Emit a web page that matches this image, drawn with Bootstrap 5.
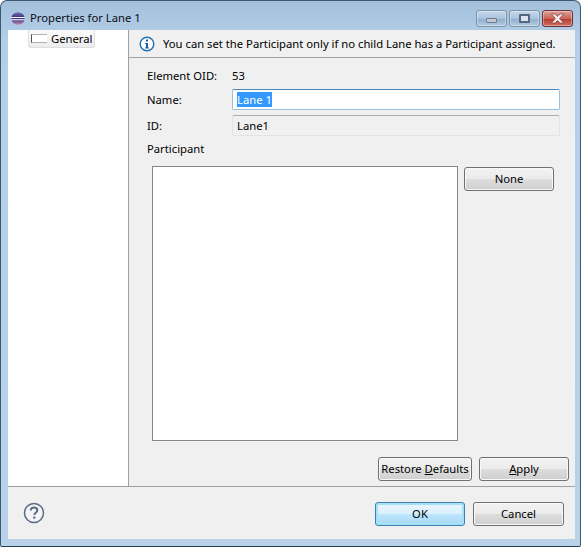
<!DOCTYPE html>
<html lang="en">
<head>
  <meta charset="UTF-8">
  <title>Properties for Lane 1</title>
  <link href="https://cdn.jsdelivr.net/npm/bootstrap@5.3.3/dist/css/bootstrap.min.css" rel="stylesheet">
  <style>
    html, body { width: 583px; height: 547px; overflow: hidden; background: #fff; }
    body { font-family: "Noto Sans", "Open Sans", sans-serif; font-size: 11.25px; line-height: 16px; color: #000; }
    .win-frame { width: 581px; height: 547px; border: 1px solid #3b5a70; border-bottom-color: #1f3f4f; border-radius: 7px 7px 2px 2px;
      background: linear-gradient(180deg, #a3c0dc 0, #b4cfe8 40px, #b9d2ea 100%); padding: 0 5px 6px 7px; }
    .win-title { height: 29px; flex: 0 0 29px; }
    .win-title-text { margin-left: 5px; margin-top: 9px; color: #0c0c14; }
    .app-logo { margin-left: 3px; margin-top: 11px; }
    .win-ctl { width: 31px; height: 17px; margin-top: 9px; border: 1px solid #7d93aa; border-radius: 3px;
      background: linear-gradient(180deg, #c5d7ea 0, #a9c3de 50%, #8fadcd 51%, #b3cbe3 100%);
      box-shadow: inset 0 0 0 1px rgba(255,255,255,.35); }
    .win-ctl + .win-ctl { margin-left: 2px; }
    .win-ctl-close { border-color: #6e3030; background: linear-gradient(180deg, #dfa398 0, #c9645a 50%, #b5372c 51%, #cf7264 100%); margin-right: 2px; }
    .glyph-min { width: 11px; height: 5px; margin-top: 7px; background: #c3cad2; border: 1px solid #6e7c8c; border-radius: 1px; }
    .glyph-max { width: 11px; height: 9px; margin-top: 3px; background: #dbe5f0; border: 2px solid #55677d; border-radius: 1px; }
    .client-area { height: 509px; flex: 0 0 509px; background: #f0f0f0; }
    .main-split { height: 457px; flex: 0 0 457px; border-bottom: 1px solid #a0a0a0; }
    .tree-pane { background: #fff; border-right: 1px solid #a0a0a0; flex: 0 0 121px; }
    .tree-item { margin: 0 0 0 20px; height: 18px; width: 67px; border: 1px solid #dedede; border-top: 0; border-radius: 0 0 3px 3px; background: linear-gradient(180deg, #fafafa, #ececec); padding-left: 2px; }
    .lane-icon { width: 16px; height: 9px; border: 1px solid #b0b0b0; border-left: 1px solid #555; border-right: 0; margin-right: 4px; background: #fff; }
    .msg-bar { height: 28px; flex: 0 0 28px; border-bottom: 1px solid #a0a0a0; padding: 0 0 0 10px; }
    .msg-text { margin-left: 8px; white-space: nowrap; }
    .prop-body { padding: 10px 6px 0 18px; }
    .oid-row { height: 16px; margin-bottom: 5px; }
    .prop-row { height: 21px; margin-bottom: 5px; }
    .prop-label { width: 85px; }
    .fake-input { width: 328px; height: 21px; padding: 2px 4px 0; }
    .input-edit { background: #fff; border: 1px solid #9cc0dc; border-top-color: #4a86b8; border-radius: 2px; }
    .input-read { background: #f0f0f0; border: 1px solid #e2e3e4; border-top-color: #abadb3; border-radius: 2px; }
    .selected-text { background: #3399ff; color: #fff; }
    .part-label { margin-bottom: 9px; height: 16px; }
    .list-box { width: 306px; height: 275px; background: #fff; border: 1px solid #828790; margin-left: 5px; }
    .win-btn { width: 90px; height: 24px; padding: 0; font-size: 11.25px; line-height: 20px; color: #000; white-space: nowrap; border: 1px solid #707070; border-radius: 3px;
      background: linear-gradient(180deg, #f2f2f2 0, #ebebeb 50%, #dddddd 51%, #cfcfcf 100%); box-shadow: inset 0 0 0 1px #f8f8f8; }
    .win-btn:hover { color: #000; border-color: #707070; }
    .win-btn-default { border-color: #3c7fb1; background: linear-gradient(180deg, #eaf6fd 0, #d9f0fc 50%, #bee6fd 51%, #a7d9f5 100%); box-shadow: inset 0 0 0 2px #a6e0f5; }
    .btn-none { margin-left: 6px; margin-top: 1px; }
    .btn-restore { width: 94px; }
    .btn-cancel { width: 91px; }
    .page-actions { padding-top: 16px; gap: 7px; }
    .dlg-footer { height: 52px; padding: 15px 11px 0 15px; }
  </style>
</head>
<body>
  <div class="win-frame d-flex flex-column">
    <div class="win-title d-flex">
      <svg class="app-logo" width="14" height="13" viewBox="0 0 14 13">
        <defs><linearGradient id="eclipseFill" x1="0" y1="0" x2="0" y2="1"><stop offset="0" stop-color="#7a6fb0"/><stop offset=".5" stop-color="#2b2a78"/><stop offset="1" stop-color="#c58fb8"/></linearGradient></defs>
        <ellipse cx="7" cy="6.500" rx="6.800" ry="6.300" fill="url(#eclipseFill)"/>
        <rect x="0" y="5" width="14" height="1.100" fill="#f2eefa"/>
        <rect x="0" y="7.200" width="14" height="1.100" fill="#f2eefa"/>
      </svg>
      <div class="win-title-text flex-grow-1">Properties for Lane 1</div>
      <div class="d-flex">
        <div class="win-ctl d-flex justify-content-center"><div class="glyph-min"></div></div>
        <div class="win-ctl d-flex justify-content-center"><div class="glyph-max"></div></div>
        <div class="win-ctl win-ctl-close d-flex justify-content-center align-items-center">
          <svg width="15" height="11" viewBox="0 0 15 11"><path d="M1.500 1h3.500l2.500 2.500L10 1h3.500l-4 4.500 4 4.500H10L7.500 7.500 5 10H1.500l4-4.500z" fill="#f4eeee" stroke="#6e3030" stroke-width=".6"/></svg>
        </div>
      </div>
    </div>
    <div class="client-area d-flex flex-column">
      <div class="main-split d-flex">
        <div class="tree-pane">
          <div class="tree-item d-flex align-items-center">
            <span class="lane-icon"></span><span>General</span>
          </div>
        </div>
        <div class="flex-grow-1">
          <div class="msg-bar d-flex align-items-center">
            <svg width="16" height="16" viewBox="0 0 16 16"><circle cx="8" cy="8" r="6.800" fill="#fff" stroke="#1f6fb5" stroke-width="1.400"/><rect x="7" y="3.500" width="2" height="2" fill="#1f5f9f"/><path d="M6 7h3v4.500h1v1H6v-1h1V8H6z" fill="#1f5f9f"/></svg>
            <span class="msg-text">You can set the Participant only if no child Lane has a Participant assigned.</span>
          </div>
          <div class="prop-body d-flex flex-column">
            <div class="d-flex align-items-center oid-row"><span class="prop-label">Element OID:</span><span>53</span></div>
            <div class="d-flex align-items-center prop-row"><span class="prop-label">Name:</span><div class="fake-input input-edit"><span class="selected-text">Lane 1</span></div></div>
            <div class="d-flex align-items-center prop-row"><span class="prop-label">ID:</span><div class="fake-input input-read">Lane1</div></div>
            <div class="part-label">Participant</div>
            <div class="d-flex align-items-start">
              <div class="list-box"></div>
              <button type="button" class="btn win-btn btn-none">None</button>
            </div>
            <div class="page-actions d-flex justify-content-end">
              <button type="button" class="btn win-btn btn-restore">Restore <u>D</u>efaults</button>
              <button type="button" class="btn win-btn"><u>A</u>pply</button>
            </div>
          </div>
        </div>
      </div>
      <div class="dlg-footer d-flex align-items-start">
        <svg width="22" height="22" viewBox="0 0 22 22"><circle cx="11" cy="11" r="9.500" fill="#f4f4f6" stroke="#5c6c88" stroke-width="1.500"/><path d="M7.800 8.500c0-2 1.500-3 3.300-3s3.200 1 3.200 2.800c0 2.400-3 2.500-3 4.700" fill="none" stroke="#5c6c88" stroke-width="2"/><rect x="10.200" y="14.500" width="2.200" height="2.200" fill="#5c6c88"/></svg>
        <div class="ms-auto d-flex gap-2">
          <button type="button" class="btn win-btn win-btn-default">OK</button>
          <button type="button" class="btn win-btn btn-cancel">Cancel</button>
        </div>
      </div>
    </div>
  </div>
</body>
</html>
